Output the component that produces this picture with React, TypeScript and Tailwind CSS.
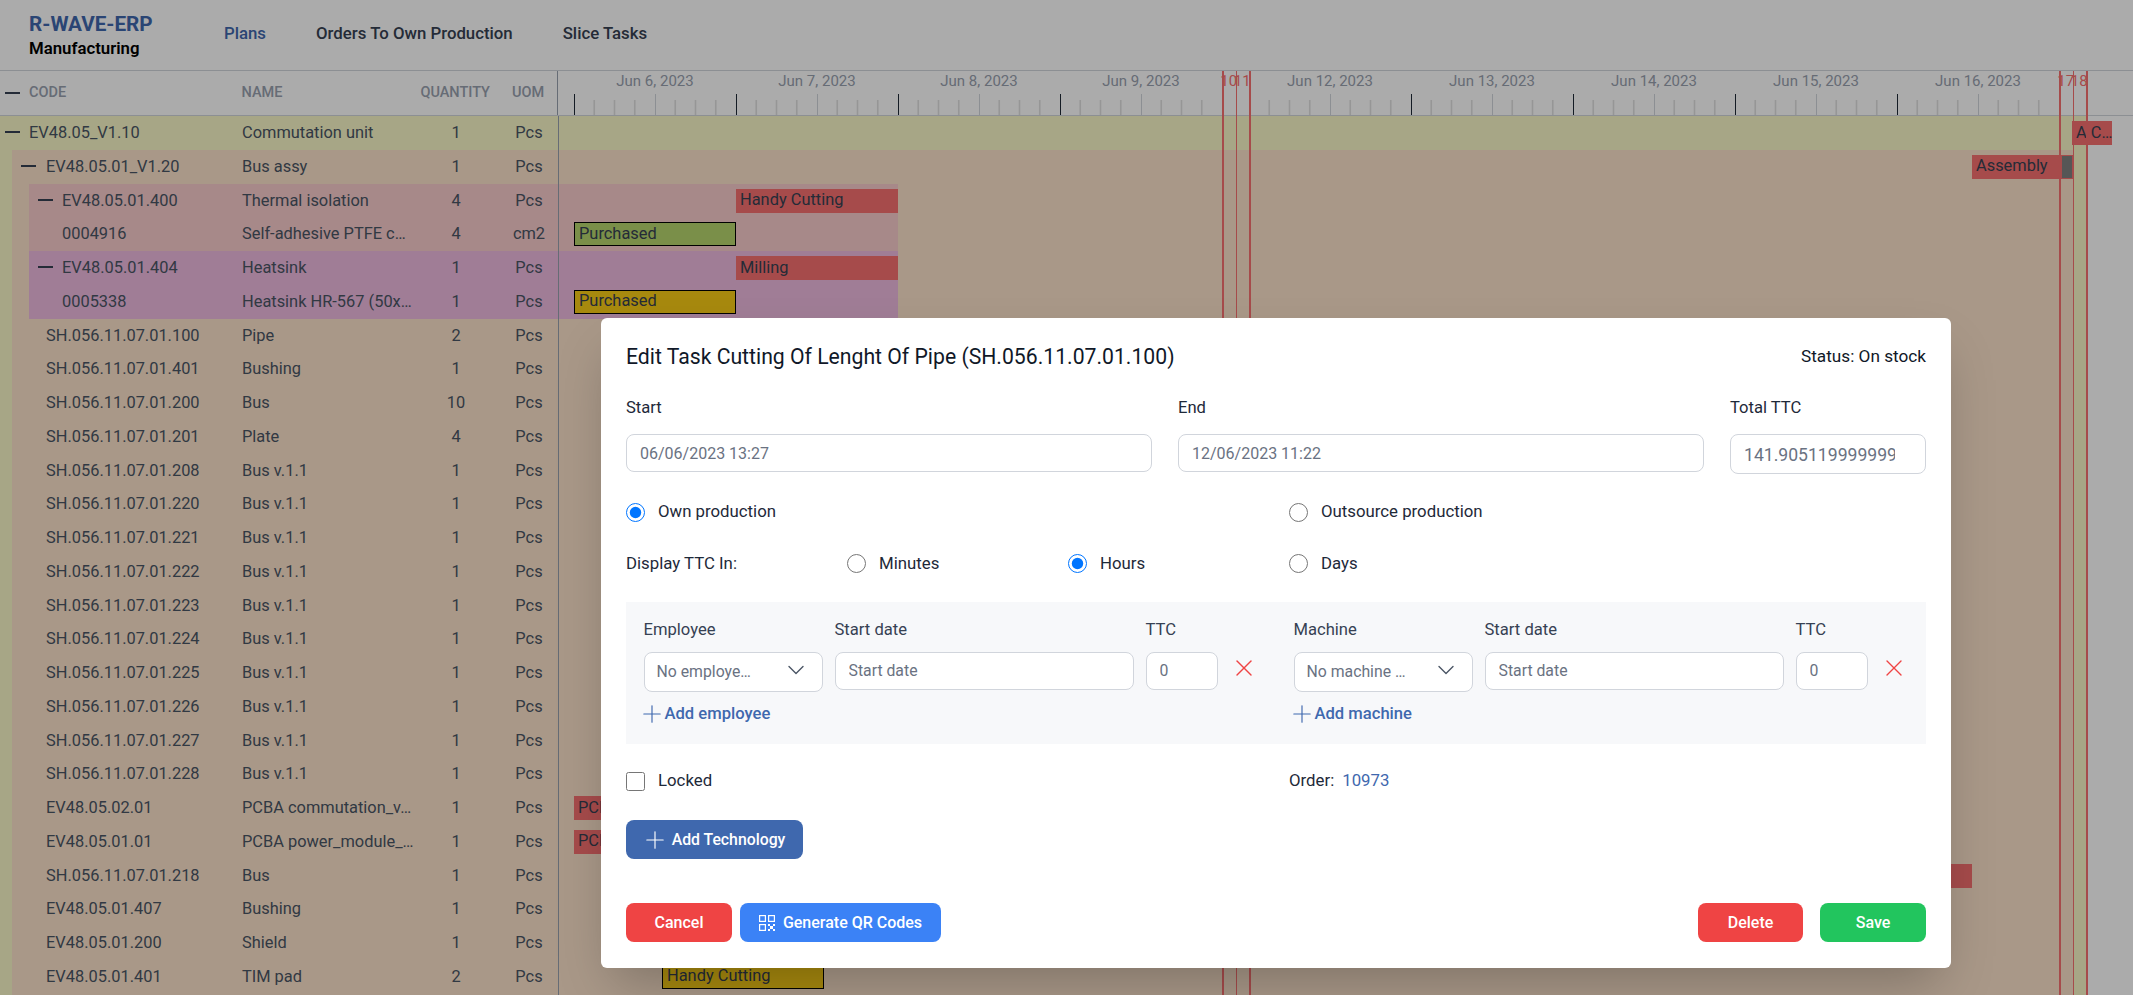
import React from 'react';
import { ChevronDown, Plus, X } from 'lucide-react';

interface RowData {
  code: string;
  name: string;
  qty: number;
  uom?: string;
  minus?: boolean;
  bars?: BarData[];
}

interface BarData {
  label?: string;
  left: string;
  width: string;
  color: string;
  outlined?: boolean;
  progress?: boolean;
}

const days = [
  { label: 'Jun 6, 2023' },
  { label: 'Jun 7, 2023' },
  { label: 'Jun 8, 2023' },
  { label: 'Jun 9, 2023' },
  { label: '10', short: true },
  { label: '11', short: true },
  { label: 'Jun 12, 2023' },
  { label: 'Jun 13, 2023' },
  { label: 'Jun 14, 2023' },
  { label: 'Jun 15, 2023' },
  { label: 'Jun 16, 2023' },
  { label: '17', short: true },
  { label: '18', short: true },
];

const busRows = ['208', '220', '221', '222', '223', '224', '225', '226', '227', '228'];

const brownRows: RowData[] = [
  { code: 'SH.056.11.07.01.100', name: 'Pipe', qty: 2 },
  { code: 'SH.056.11.07.01.401', name: 'Bushing', qty: 1 },
  { code: 'SH.056.11.07.01.200', name: 'Bus', qty: 10 },
  { code: 'SH.056.11.07.01.201', name: 'Plate', qty: 4 },
  ...busRows.map((n) => ({ code: `SH.056.11.07.01.${n}`, name: 'Bus v.1.1', qty: 1 })),
  {
    code: 'EV48.05.02.01',
    name: 'PCBA commutation_v…',
    qty: 1,
    bars: [{ label: 'PCBA', left: 'left-[562px]', width: 'w-[162px]', color: 'bg-[#f87171]' }],
  },
  {
    code: 'EV48.05.01.01',
    name: 'PCBA power_module_…',
    qty: 1,
    bars: [{ label: 'PCBA', left: 'left-[562px]', width: 'w-[162px]', color: 'bg-[#f87171]' }],
  },
  {
    code: 'SH.056.11.07.01.218',
    name: 'Bus',
    qty: 1,
    bars: [{ left: 'left-[1798px]', width: 'w-[162px]', color: 'bg-[#f87171]' }],
  },
  { code: 'EV48.05.01.407', name: 'Bushing', qty: 1 },
  { code: 'EV48.05.01.200', name: 'Shield', qty: 1 },
  {
    code: 'EV48.05.01.401',
    name: 'TIM pad',
    qty: 2,
    bars: [{ label: 'Handy Cutting', left: 'left-[650px]', width: 'w-[162px]', color: 'bg-[#facc15]', outlined: true }],
  },
];

function Bar({ bar }: { bar: BarData }) {
  return (
    <div
      className={`absolute top-[5px] flex h-6 items-center overflow-hidden whitespace-nowrap px-[4px] text-gray-700 ${bar.left} ${bar.width} ${bar.color} ${bar.outlined ? 'border border-black' : ''}`}
    >
      {bar.label}
      {bar.progress && <div className="absolute top-px right-px bottom-px w-[10px] bg-[#808080]" />}
    </div>
  );
}

function Row({ row, level }: { row: RowData; level: 0 | 1 | 2 }) {
  const codeClass =
    level === 0 ? 'w-[242px] pl-[29px]' : level === 1 ? 'w-[230px] pl-[34px]' : 'w-[213px] pl-[33px]';
  const minusClass = level === 0 ? 'left-[5px]' : 'left-[9px]';
  return (
    <div className="relative flex h-[33.76px] items-center pt-px text-gray-600">
      {row.minus && <span className={`absolute top-[15px] h-[2px] w-[15px] bg-gray-700 ${minusClass}`} />}
      <div className={`shrink-0 whitespace-nowrap ${codeClass}`}>{row.code}</div>
      <div className="w-[178px] shrink-0 whitespace-nowrap">{row.name}</div>
      <div className="w-[72px] shrink-0 text-center">{row.qty}</div>
      <div className="ml-2 w-[58px] shrink-0 text-center">{row.uom ?? 'Pcs'}</div>
      {row.bars?.map((bar, i) => <Bar key={i} bar={bar} />)}
    </div>
  );
}

function DayRuler() {
  const ticks = [1, 2, 3, 5, 6, 7];
  return (
    <svg width="162" height="21" className="block">
      <line x1="0.5" y1="0" x2="0.5" y2="21" stroke="#1f2937" />
      <line x1="81.5" y1="0" x2="81.5" y2="21" stroke="#d1d5db" />
      {ticks.map((t) => (
        <line key={t} x1={t * 20.25} y1="6" x2={t * 20.25} y2="21" stroke="#e0e0e0" strokeWidth="1.6" />
      ))}
    </svg>
  );
}

function Timeline() {
  return (
    <div className="flex pl-[16px]">
      {days.map((day, i) =>
        day.short ? (
          <div key={i} className="flex w-[13.5px] shrink-0 justify-center text-[15px] leading-[20px] whitespace-nowrap text-[#f87171]">
            {day.label}
          </div>
        ) : (
          <div key={i} className="flex h-[44px] w-[162px] shrink-0 flex-col justify-between">
            <div className="text-center text-[15px] leading-[20px] text-gray-400">{day.label}</div>
            <DayRuler />
          </div>
        ),
      )}
    </div>
  );
}

function Field({ value, placeholder, className }: { value?: string; placeholder?: string; className: string }) {
  return (
    <input
      readOnly
      value={value}
      placeholder={placeholder}
      className={`rounded-lg border border-gray-300 bg-white px-[13px] font-normal text-gray-500 outline-none placeholder:text-gray-500 ${className}`}
    />
  );
}

function Radio({ label, checked }: { label: string; checked?: boolean }) {
  return (
    <label className="flex items-center gap-[13px]">
      <input type="radio" readOnly checked={!!checked} className="m-0 h-[19px] w-[19px]" />
      <span>{label}</span>
    </label>
  );
}

function Assignees({ title, placeholder, add }: { title: string; placeholder: string; add: string }) {
  return (
    <div>
      <div className="grid grid-cols-[179px_299px_72px] gap-x-3 text-[16.6px] leading-6 font-[450] text-gray-700">
        <div>{title}</div>
        <div>Start date</div>
        <div>TTC</div>
      </div>
      <div className="mt-[10px] flex items-start">
        <div className="flex h-10 w-[179px] items-center justify-between rounded-lg border border-gray-300 bg-white pr-[12px] pb-px pl-[12px] text-[15.8px] text-gray-500">
          <span>{placeholder}</span>
          <ChevronDown className="-mt-[3px] h-[28px] w-[28px] text-gray-600" strokeWidth={1.2} />
        </div>
        <Field placeholder="Start date" className="ml-3 h-[38px] w-[299px] pb-[2px] text-[15.8px]" />
        <Field value="0" className="ml-3 h-[38px] w-[72px] pb-[2px] text-[15.8px]" />
        <X className="mt-[2px] ml-[12px] h-[28px] w-[28px] text-[#ef4444]" strokeWidth={1.2} />
      </div>
      <div className="mt-[8px] flex items-center text-[16.6px] font-medium text-[#3f68ae]">
        <Plus className="-ml-[6px] h-[28px] w-[28px]" strokeWidth={1} />
        <span className="-ml-[1px]">{add}</span>
      </div>
    </div>
  );
}

function QrIcon() {
  return (
    <svg width="16" height="16" viewBox="0 0 16 16" fill="none" stroke="currentColor" strokeWidth="1.2">
      <rect x="0.6" y="0.6" width="5.8" height="5.8" />
      <rect x="9.6" y="0.6" width="5.8" height="5.8" />
      <rect x="0.6" y="9.6" width="5.8" height="5.8" />
      <g fill="currentColor" stroke="none">
        <rect x="9" y="9" width="2" height="2" />
        <rect x="14" y="9" width="2" height="2" />
        <rect x="11" y="11" width="3" height="3" />
        <rect x="9" y="14" width="2" height="2" />
        <rect x="14" y="14" width="2" height="2" />
      </g>
    </svg>
  );
}

function Modal() {
  return (
    <div className="absolute top-[318px] left-[601px] h-[650px] w-[1350px] rounded-md bg-white px-[25px] pt-[24px] text-[16.8px] text-gray-800 shadow-2xl">
      <div className="flex h-[30px] items-center justify-between">
        <h2 className="text-[21.2px] font-[450] text-gray-900">Edit Task Cutting Of Lenght Of Pipe (SH.056.11.07.01.100)</h2>
        <span className="text-[17.2px] font-[450] text-gray-900">Status: On stock</span>
      </div>
      <div className="mt-[24px] grid grid-cols-[526px_526px_196px] gap-x-[26px] text-[16.6px] leading-6 font-[450]">
        <div>Start</div>
        <div>End</div>
        <div>Total TTC</div>
        <Field value="06/06/2023 13:27" className="mt-[14px] h-[38px] w-full text-[16px]" />
        <Field value="12/06/2023 11:22" className="mt-[14px] h-[38px] w-full text-[16px]" />
        <Field value="141.90511999999999" className="mt-[14px] h-10 w-full pt-[2px] pr-[30px] text-[17.6px]" />
      </div>
      <div className="mt-[26px] flex h-6 items-center">
        <div className="w-[663px]">
          <Radio label="Own production" checked />
        </div>
        <Radio label="Outsource production" />
      </div>
      <div className="mt-[27px] grid h-6 grid-cols-[221px_221px_221px_1fr] items-center">
        <div>Display TTC In:</div>
        <Radio label="Minutes" />
        <Radio label="Hours" checked />
        <Radio label="Days" />
      </div>
      <div className="mt-[27px] grid h-[142px] grid-cols-[650px_1fr] bg-[#f7f8fa] px-[17.5px] pt-[16px]">
        <Assignees title="Employee" placeholder="No employe…" add="Add employee" />
        <Assignees title="Machine" placeholder="No machine …" add="Add machine" />
      </div>
      <div className="mt-[25px] flex h-6 items-center">
        <label className="flex w-[663px] items-center gap-[13px]">
          <input type="checkbox" readOnly className="m-0 h-[19px] w-[19px]" />
          Locked
        </label>
        <span>Order:</span>
        <span className="ml-2 text-[#3f68ae]">10973</span>
      </div>
      <button className="mt-[27px] flex h-[39px] w-[177px] items-center justify-center rounded-lg bg-[#3f68ae] pr-[2px] text-[15.8px] font-medium text-white">
        <Plus className="-ml-[1px] h-[28px] w-[28px]" strokeWidth={1} />
        <span className="ml-[3px]">Add Technology</span>
      </button>
      <div className="mt-[44px] flex h-[39px] items-stretch text-[16px] font-medium text-white">
        <button className="w-[106px] rounded-lg bg-[#ef4444]">Cancel</button>
        <button className="ml-2 flex w-[201px] items-center justify-center gap-2 rounded-lg bg-[#3b82f6]">
          <QrIcon />
          Generate QR Codes
        </button>
        <button className="ml-auto w-[105px] rounded-lg bg-[#ef4444]">Delete</button>
        <button className="ml-[17px] w-[106px] rounded-lg bg-[#22c55e]">Save</button>
      </div>
    </div>
  );
}

export default function App() {
  return (
    <div className="relative h-[995px] w-[2133px] overflow-hidden bg-white font-['Roboto',sans-serif] text-[16.4px]">
      <header className="flex h-[71px] items-center border-b border-gray-300 pl-[29px]">
        <div className="w-[195px]">
          <div className="text-[20.7px] leading-[26px] font-bold text-[#3f68ae]">R-WAVE-ERP</div>
          <div className="text-[16.8px] leading-[22px] font-semibold text-black">Manufacturing</div>
        </div>
        <nav className="-mt-[3px] flex gap-[50px] text-[16.8px] font-medium text-gray-700">
          <a className="text-[#3f68ae]">Plans</a>
          <a>Orders To Own Production</a>
          <a>Slice Tasks</a>
        </nav>
      </header>

      <div className="flex h-[45px] border-b border-gray-300">
        <div className="relative flex w-[558px] shrink-0 items-center border-r border-gray-400 text-[14.5px] font-medium text-gray-400 uppercase">
          <span className="absolute top-[21px] left-[5px] h-[2px] w-[15px] bg-gray-700" />
          <div className="w-[242px] pl-[29px]">Code</div>
          <div className="w-[178px]">Name</div>
          <div className="w-[72px] text-center">Quantity</div>
          <div className="ml-2 w-[58px] text-center">Uom</div>
        </div>
        <Timeline />
      </div>

      <div className="w-[2087px] bg-[#f9f8c8]">
        <Row
          level={0}
          row={{
            code: 'EV48.05_V1.10',
            name: 'Commutation unit',
            qty: 1,
            minus: true,
            bars: [{ label: 'A C…', left: 'left-[2072px]', width: 'w-[40px]', color: 'bg-[#f87171]' }],
          }}
        />
        <div className="ml-[12px] w-[2061px] bg-[#fde3cb] pb-4">
          <Row
            level={1}
            row={{
              code: 'EV48.05.01_V1.20',
              name: 'Bus assy',
              qty: 1,
              minus: true,
              bars: [{ label: 'Assembly', left: 'left-[1960px]', width: 'w-[101px]', color: 'bg-[#f87171]', progress: true }],
            }}
          />
          <div className="ml-[17px] w-[869px] bg-[#f9cccc]">
            <Row
              level={2}
              row={{
                code: 'EV48.05.01.400',
                name: 'Thermal isolation',
                qty: 4,
                minus: true,
                bars: [{ label: 'Handy Cutting', left: 'left-[707px]', width: 'w-[162px]', color: 'bg-[#f87171]' }],
              }}
            />
            <Row
              level={2}
              row={{
                code: '0004916',
                name: 'Self-adhesive PTFE c…',
                qty: 4,
                uom: 'cm2',
                bars: [{ label: 'Purchased', left: 'left-[545px]', width: 'w-[162px]', color: 'bg-[#b6d56e]', outlined: true }],
              }}
            />
          </div>
          <div className="ml-[17px] w-[869px] bg-[#efbbe0]">
            <Row
              level={2}
              row={{
                code: 'EV48.05.01.404',
                name: 'Heatsink',
                qty: 1,
                minus: true,
                bars: [{ label: 'Milling', left: 'left-[707px]', width: 'w-[162px]', color: 'bg-[#f87171]' }],
              }}
            />
            <Row
              level={2}
              row={{
                code: '0005338',
                name: 'Heatsink HR-567 (50x…',
                qty: 1,
                bars: [{ label: 'Purchased', left: 'left-[545px]', width: 'w-[162px]', color: 'bg-[#facc15]', outlined: true }],
              }}
            />
          </div>
          {brownRows.map((row) => (
            <Row key={row.code} row={row} level={1} />
          ))}
        </div>
      </div>

      {/* gantt divider and non working day markers */}
      <div className="absolute top-[116px] bottom-0 left-[558px] w-px bg-gray-400" />
      <div className="absolute top-[71px] bottom-0 left-[1222px] w-[2px] bg-[#f87171]" />
      <div className="absolute top-[71px] bottom-0 left-[1236px] w-px bg-[#f87171]" />
      <div className="absolute top-[71px] bottom-0 left-[1249px] w-[2px] bg-[#f87171]" />
      <div className="absolute top-[71px] bottom-0 left-[2059px] w-[2px] bg-[#f87171]" />
      <div className="absolute top-[71px] bottom-0 left-[2073px] w-px bg-[#f87171]" />
      <div className="absolute top-[71px] bottom-0 left-[2086px] w-[2px] bg-[#f87171]" />

      <div className="absolute inset-0 bg-black/33" />
      <Modal />
    </div>
  );
}
